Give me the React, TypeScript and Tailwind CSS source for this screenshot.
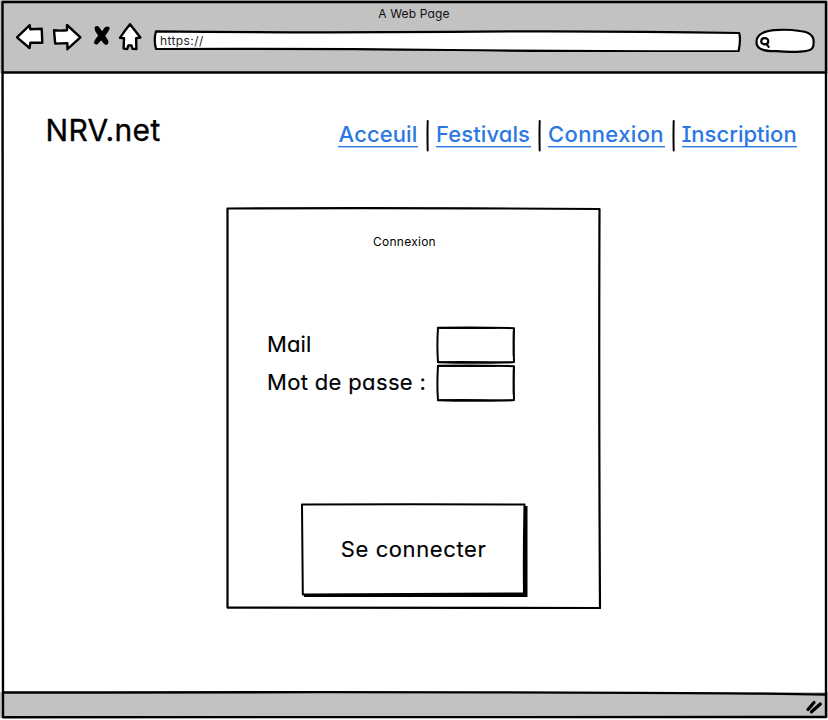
import React from "react";

const ink = { fill: "none", stroke: "#000", strokeLinejoin: "round", strokeLinecap: "round" } as const;

function BrowserIcons() {
  return (
    <svg className="block h-[34px] w-[140px]" viewBox="10 20 140 34" {...ink} strokeWidth="2.4">
      <path fill="#fff" d="M17 37.3 L29.7 25.2 L30.3 29.3 L41.7 28.8 L42.3 42.8 L30.4 42.6 L29.5 48 Z" />
      <path fill="#fff" d="M80.4 37.4 L67 25 L67 30.3 Q60 31 54 30.3 L55.2 43.6 L67.4 43.1 L67.4 49.2 Z" />
      <path fill="#000" strokeWidth="1.5" d="M95.300 27.500 Q97 26 98.800 27.800 L102 32.500 L105.500 27.800 Q107.500 26.500 109 28 Q108.500 31 104.300 35.600 L107.500 41 Q108.200 43.500 106.200 44.200 Q104.500 44 101.300 39 L97.300 43.600 Q95.300 44.300 94.600 42.500 Q95.500 39.500 99 35.700 L95.800 30.500 Z" />
      <path fill="#fff" d="M130 24.3 Q134.500 30 140.4 37.6 L136.100 38.2 L136.4 49 L132.5 48.8 L131.400 45.4 L128.4 45.4 L127.2 49 L123.6 48.600 L124 38.2 L120 37.800 Q124.500 31 130 24.3 Z" />
    </svg>
  );
}

function Header() {
  return (
    <header className="relative h-[73px] bg-[#c2c2c2]">
      <div className="flex h-7 items-center justify-center text-[12px] tracking-[0.15px] text-[#111]">A Web Page</div>
      <div className="absolute left-2.5 top-5">
        <BrowserIcons />
      </div>
      <div className="relative ml-[153px] flex h-[24px] w-[590px] items-center pl-[7px]">
        <svg className="absolute inset-0 h-full w-full" viewBox="153 28 590 24" {...ink} strokeWidth="2.2">
          <path fill="#fff" d="M156 31.300 Q300 33 450 31.800 T739.200 33 Q741 39 738.600 51.300 Q590 51.500 450 50 T156 49 Q153.500 40 156 31.300 Z" />
        </svg>
        <span className="relative pt-0.5 text-[12px] tracking-[0.4px] text-[#222]">https://</span>
      </div>
      <svg className="absolute left-[752px] top-[26px] h-[30px] w-[66px]" viewBox="752 26 66 30" {...ink} strokeWidth="2.2">
        <path fill="#fff" d="M756.500 42 C756.500 34 764 31.500 774 30.200 Q787 29 800 31 C809 32 814 36 813.600 42 C814 48.500 812 50.500 803 51.300 Q790 52.500 777 51.200 C763 51.500 756.500 49 756.500 42 Z" />
        <path d="M761.300 41 Q761.500 38 765 38.200 Q768.500 38.500 768.200 41.600 Q768 44.300 764.500 44.300 Q761 44 761.300 41 Z M766.500 43.800 L768.600 46.800" />
      </svg>
    </header>
  );
}

function NavLink({ children, className }: { children: string; className: string }) {
  return (
    <a
      href="#"
      className={`flex h-[26px] items-center justify-center whitespace-nowrap border-b border-[#2b78e4] pt-0.5 shadow-[0_1px_0_#2b78e466] ${className}`}
    >
      {children}
    </a>
  );
}

function Separator({ className }: { className: string }) {
  return (
    <svg className={`h-8 w-[3px] shrink-0 ${className}`} viewBox="0 0 3 32" {...ink} strokeWidth="2">
      <path d="M1.700 1 Q1.300 16 1.700 30.500" />
    </svg>
  );
}

function Nav() {
  return (
    <nav className="ml-[338px] flex h-8 items-start text-[22px] font-medium text-[#2b78e4]">
      <NavLink className="mt-px w-20 tracking-[0.1px]">Acceuil</NavLink>
      <Separator className="ml-[7.5px]" />
      <NavLink className="ml-[7px] mt-px w-[95px] tracking-[0.1px]">Festivals</NavLink>
      <Separator className="ml-[7px]" />
      <NavLink className="ml-[7px] mt-px w-[117px] tracking-[0.350px]">Connexion</NavLink>
      <Separator className="ml-[7px]" />
      <NavLink className="ml-[7px] mt-px w-[115px]">Inscription</NavLink>
    </nav>
  );
}

function Field({ label, className }: { label: string; className: string }) {
  return (
    <label className="flex h-[38px] items-center">
      <span className={`w-[169px] whitespace-nowrap pb-0.5 text-[22px] [-webkit-text-stroke:0.15px_#000] ${className}`}>{label}</span>
      <svg className="h-[38px] w-[79px]" viewBox="0 0 79 38" {...ink} strokeWidth="2">
        <path d="M2 1.800 Q40 0.800 78 2.200 Q77.500 20 78 36 Q40 37.300 2 36.200 Q0.800 20 2 1.800 Z" />
        <path strokeWidth="1.500" d="M1.500 2 Q30 2.700 60 2 M77.500 5 V30 M2 36 Q35 35.500 77 36.500" />
      </svg>
    </label>
  );
}

function LoginCard() {
  return (
    <section className="relative ml-[226px] flex h-[402px] w-[376px] flex-col">
      <svg className="absolute inset-0 h-full w-full" viewBox="226 207 376 402" {...ink} strokeWidth="2.2">
        <path d="M227.500 208.500 Q400 207.700 599.500 209 Q598.800 400 600 608 Q410 608.500 227.500 607.600 Q226.800 400 227.500 208.500 Z" />
      </svg>
      <h2 className="mt-[25px] pr-[19px] text-center text-[12px] leading-5 tracking-[0.25px]">Connexion</h2>
      <form className="relative mt-[74px] pl-[41px]">
        <Field label="Mail" className="tracking-[0.1px]" />
        <Field label="Mot de passe :" className="tracking-[0.340px]" />
      </form>
      <button type="button" className="relative ml-[75px] mt-[101px] flex h-[94px] w-[227px] items-center justify-center pb-[2px] pr-[2px] text-[22px]">
        <svg className="absolute inset-0 h-full w-full" viewBox="301 503 227 94" {...ink}>
          <path fill="#000" stroke="none" d="M304 506 L527.500 506 L527.500 597.500 L304 597.500 Z" />
          <path fill="#fff" strokeWidth="2" d="M302 504.500 Q410 504 524.500 504.500 Q523.500 550 524 593.500 Q410 594.500 302.800 594.500 Q302.500 545 302 504.500 Z" />
        </svg>
        <span className="relative tracking-[0.600px] [-webkit-text-stroke:0.15px_#000]">Se connecter</span>
      </button>
    </section>
  );
}

export default function App() {
  return (
    <div className="relative flex h-[720px] w-[828px] flex-col overflow-hidden bg-white font-['Inter',sans-serif] text-black [font-feature-settings:'cv11','cv08']">
      <Header />
      <main className="h-[619px] shrink-0">
        <h1 className="ml-[45.5px] mt-[39px] h-[36px] text-[30px] leading-9 tracking-[0.300px] [-webkit-text-stroke:0.35px_#000]">NRV.net</h1>
        <div className="-mt-[28px]">
          <Nav />
        </div>
        <div className="mt-[55px]">
          <LoginCard />
        </div>
      </main>
      <footer className="relative h-[26px] shrink-0 bg-[#c2c2c2]">
        <svg className="absolute right-1 top-[6px] h-[18px] w-5" viewBox="804 698 20 18" {...ink} strokeWidth="3.300">
          <path d="M808 709.500 L814 702.500 M811.500 711.800 L820.300 704" />
        </svg>
      </footer>
      <svg className="pointer-events-none absolute inset-0 h-full w-full" viewBox="0 0 828 720" {...ink} strokeWidth="2.400">
        <path stroke="#fff" strokeWidth="3" d="M0 719.500 H828" />
        <path d="M2.500 2 H826 V717 Q400 718.300 3 717.200 Z" />
        <path d="M3 72.500 H826 M3 692.500 Q650 691.300 826 694.500" />
      </svg>
    </div>
  );
}
